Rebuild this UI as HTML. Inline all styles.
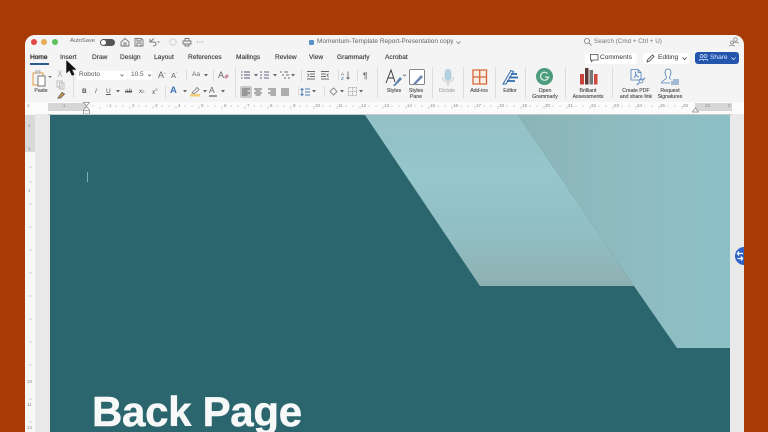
<!DOCTYPE html>
<html><head><meta charset="utf-8"><style>
html,body{margin:0;padding:0;width:768px;height:432px;overflow:hidden;background:#a83a05}
body{position:relative;font-family:"Liberation Sans",sans-serif;color:#333}
.t{position:absolute;white-space:nowrap;line-height:1}
.tab{font-size:6.6px;top:55px;color:#3c3c3c;-webkit-text-stroke:.15px #3c3c3c}
.lb{font-size:5.2px;color:#444;text-align:center;transform:translateX(-50%);line-height:6px;-webkit-text-stroke:.1px #444}
.sep{position:absolute;width:1px;background:#dcdcdc}
svg{position:absolute;overflow:visible}
</style></head><body>
<div style="position:absolute;left:24.5px;top:34.5px;width:719.5px;height:397.5px;background:#ebebeb;border-radius:10px 10px 0 0;overflow:hidden">
  <div style="position:absolute;left:0;top:0;width:720px;height:67px;background:#f4f4f4"></div>
  <div style="position:absolute;left:0;top:67px;width:720px;height:12px;background:#fbfbfb"></div>
  <div style="position:absolute;left:0;top:79px;width:720px;height:319px;background:#e9e9e9"></div>
  <div style="position:absolute;left:0;top:79px;width:10.500px;height:319px;background:#f8f8f8"></div>
  <div style="position:absolute;left:0;top:80.500px;width:10.500px;height:37px;background:#d9d9d9"></div>
</div>
<!-- traffic lights -->
<div style="position:absolute;left:30.5px;top:39px;width:6px;height:6px;border-radius:50%;background:#e0484a"></div>
<div style="position:absolute;left:41px;top:39px;width:6px;height:6px;border-radius:50%;background:#e9ac54"></div>
<div style="position:absolute;left:51.5px;top:39px;width:6px;height:6px;border-radius:50%;background:#5cc05a"></div>
<div class="t" style="left:70px;top:39px;font-size:5.8px;color:#666">AutoSave</div>
<div style="position:absolute;left:100px;top:38.5px;width:15px;height:7px;border-radius:4px;background:#555"></div>
<div style="position:absolute;left:101px;top:39.5px;width:5px;height:5px;border-radius:50%;background:#fff"></div>
<svg style="left:120px;top:37px" width="90" height="10" fill="none" stroke="#777" stroke-width=".9">
<path d="M1 5L5 1.500L9 5V9H1Z"/><path d="M4 9V6H6V9"/>
<path d="M15 1.500H21L23 3V9H15ZM17 1.500V4H21V1.500M17 9V6H21V9"/>
<path d="M30 2V5H33C37 5 37 9 33 9"/><path d="M30 5L34 1.500"/>
<path d="M37 4.500L38.500 6L40 4.500" fill="#777" stroke="none"/>
<circle cx="53" cy="5" r="3.200" stroke="#ccc"/>
<path d="M63 4H71V7H63ZM65 4V1.500H69V4M65 7V9H69V7"/>
<path d="M77 5H77.800M79.500 5H80.300M82 5H82.800"/>
</svg>
<!-- title -->
<div style="position:absolute;left:309px;top:39.5px;width:5px;height:5px;border-radius:1px;background:#5b93c7"></div>
<div class="t" style="left:317px;top:38.5px;font-size:6.500px;color:#666">Momentum-Template Report-Presentation copy</div>
<svg style="left:456px;top:40.500px" width="6" height="4" fill="none" stroke="#777" stroke-width=".8"><path d="M.5 .5L2.500 2.500L4.500 .5"/></svg>
<svg style="left:584px;top:38px" width="8" height="8" fill="none" stroke="#777" stroke-width=".8"><circle cx="3" cy="3" r="2.500"/><path d="M5 5L7.500 7.500"/></svg>
<div class="t" style="left:594px;top:38.500px;font-size:6.300px;color:#777">Search (Cmd + Ctrl + U)</div>
<svg style="left:729px;top:37px" width="10" height="10" fill="none" stroke="#8a8a8a" stroke-width=".8"><circle cx="6.500" cy="2.500" r="1.800"/><path d="M4 6.500C4 5 9 4.500 9.500 6.500"/><circle cx="3" cy="5.500" r="1.500"/><path d="M.5 9.500C.5 8 5 7.500 5.500 9.500"/></svg>
<!-- tabs -->
<div class="t tab" style="left:30px;color:#2b2b2b;-webkit-text-stroke:.3px #2b2b2b">Home</div>
<div style="position:absolute;left:30px;top:63px;width:19px;height:1.500px;background:#2c5b94"></div>
<div class="t tab" style="left:60px">Insert</div>
<div class="t tab" style="left:92px">Draw</div>
<div class="t tab" style="left:120px">Design</div>
<div class="t tab" style="left:154px">Layout</div>
<div class="t tab" style="left:188px">References</div>
<div class="t tab" style="left:236px">Mailings</div>
<div class="t tab" style="left:275px">Review</div>
<div class="t tab" style="left:309px">View</div>
<div class="t tab" style="left:337px">Grammarly</div>
<div class="t tab" style="left:385px">Acrobat</div>
<!-- comments/editing/share -->
<div style="position:absolute;left:585px;top:53px;width:52px;height:10.500px;background:#fff;border-radius:3px"></div>
<svg style="left:590px;top:54px" width="9" height="8" fill="none" stroke="#444" stroke-width=".8"><path d="M.5 .5H8V6H3L1.500 7.500V6H.5Z"/></svg>
<div class="t" style="left:600px;top:54.500px;font-size:6.600px;color:#333">Comments</div>
<div style="position:absolute;left:643px;top:53px;width:46px;height:10.500px;background:#fff;border-radius:3px"></div>
<svg style="left:646px;top:53.500px" width="9" height="9" fill="none" stroke="#444" stroke-width=".8"><path d="M1 8L1.500 6L6.500 1L8 2.500L3 7.500Z"/></svg>
<div class="t" style="left:658px;top:54.500px;font-size:6.600px;color:#333">Editing</div>
<svg style="left:682px;top:57px" width="6" height="4" fill="none" stroke="#444" stroke-width=".8"><path d="M.5 .5L2.500 2.500L4.500 .5"/></svg>
<div style="position:absolute;left:695px;top:52px;width:44px;height:12px;background:#2355ac;border-radius:3px"></div>
<svg style="left:699px;top:54px" width="9" height="8" fill="none" stroke="#cfe0ff" stroke-width=".7"><circle cx="2.500" cy="2" r="1.500"/><circle cx="6.500" cy="2" r="1.500"/><path d="M.5 7V5.500H4.500V7M4.500 5.500H8.500V7"/></svg>
<div class="t" style="left:710px;top:54.500px;font-size:6.600px;color:#d8e6ff">Share</div>
<svg style="left:731px;top:57px" width="6" height="4" fill="none" stroke="#d8e6ff" stroke-width=".8"><path d="M.5 .5L2.500 2.500L4.500 .5"/></svg>
<!-- clipboard group -->
<svg style="left:32px;top:70px" width="22" height="18" fill="none">
<path d="M1 3H11V15H1Z" stroke="#e19a45" stroke-width="1"/><path d="M4 3V1H8V3Z" stroke="#999" stroke-width=".8" fill="#eee"/>
<rect x="6" y="6" width="7" height="10" fill="#fff" stroke="#666" stroke-width=".9"/>
<path d="M16 6L18 8L20 6" fill="#777"/></svg>
<div class="t lb" style="left:41px;top:87.500px">Paste</div>
<svg style="left:55px;top:70px" width="12" height="30" fill="none" stroke="#bbb" stroke-width=".9">
<path d="M3.500 0.500L5 4L6.500 .5M3 7L4.300 4L5.700 4L7 7"/><path d="M2 11H7V17H2ZM4.500 13H9V19H4.500Z"/>
<path d="M3 28L7 22.500L9.500 24L5.500 28Z" fill="#e39c3c" stroke="#666"/></svg>
<div class="sep" style="left:73px;top:67px;height:31px"></div>
<!-- font -->
<div style="position:absolute;left:77px;top:70.500px;width:50px;height:9.500px;background:#fff;border-radius:2px"></div>
<div class="t" style="left:79px;top:72px;font-size:6.500px;color:#555">Roboto</div>
<div style="position:absolute;left:128px;top:70.500px;width:24px;height:9.500px;background:#fff;border-radius:2px"></div>
<div class="t" style="left:131px;top:72px;font-size:6.500px;color:#555">10.5</div>
<svg style="left:120px;top:74px" width="38" height="4" fill="none" stroke="#666" stroke-width=".8"><path d="M.5 .5L2 2L3.500 .5M28 .5L29.500 2L31 .5"/></svg>
<div class="t" style="left:158px;top:70.500px;font-size:9px;color:#666">A<span style="font-size:4px;vertical-align:3px">^</span></div>
<div class="t" style="left:171px;top:71.500px;font-size:7.500px;color:#666">A<span style="font-size:4px;vertical-align:3px">ˇ</span></div>
<div class="sep" style="left:186px;top:70px;height:11px"></div>
<div class="t" style="left:192px;top:72px;font-size:6.500px;color:#666">Aa</div>
<svg style="left:204px;top:74px" width="5" height="4" fill="#666"><path d="M0 0H4L2 2.500Z"/></svg>
<div class="sep" style="left:213px;top:70px;height:11px"></div>
<div class="t" style="left:218px;top:70.500px;font-size:9px;color:#666">A</div>
<svg style="left:224px;top:74px" width="6" height="6" fill="#c98fa0"><path d="M0 3L3 0L5 2L2 5Z"/></svg>
<div class="t" style="left:82px;top:89px;font-size:6.500px;font-weight:bold;color:#555">B</div>
<div class="t" style="left:95px;top:89px;font-size:6.500px;font-style:italic;color:#555">I</div>
<div class="t" style="left:106px;top:89px;font-size:6.500px;color:#555;text-decoration:underline">U</div>
<svg style="left:116px;top:90px" width="5" height="4" fill="#666"><path d="M0 0H4L2 2.500Z"/></svg>
<div class="t" style="left:125px;top:89px;font-size:6.500px;color:#555;text-decoration:line-through">ab</div>
<div class="t" style="left:139px;top:89px;font-size:6.500px;color:#555">x<span style="font-size:4px">2</span></div>
<div class="t" style="left:152px;top:88px;font-size:6.500px;color:#555">x<span style="font-size:4px;vertical-align:3px">2</span></div>
<div class="sep" style="left:165px;top:86px;height:12px"></div>
<div class="t" style="left:170px;top:86px;font-size:9.500px;font-weight:bold;color:#3e74b8">A</div>
<svg style="left:183px;top:90px" width="5" height="4" fill="#666"><path d="M0 0H4L2 2.500Z"/></svg>
<svg style="left:190px;top:86px" width="11" height="11"><path d="M2 7L7 1.500L9 3.500L4 8Z" fill="none" stroke="#777" stroke-width=".8"/><rect x="0" y="8" width="10" height="2.500" fill="#f3cf7a"/></svg>
<svg style="left:203px;top:90px" width="5" height="4" fill="#666"><path d="M0 0H4L2 2.500Z"/></svg>
<div class="t" style="left:209px;top:86px;font-size:8.500px;color:#666">A</div>
<div style="position:absolute;left:209px;top:95px;width:8px;height:1.500px;background:#999"></div>
<svg style="left:221px;top:90px" width="5" height="4" fill="#666"><path d="M0 0H4L2 2.500Z"/></svg>
<div class="sep" style="left:235px;top:67px;height:31px"></div>
<!-- paragraph row 1 -->
<svg style="left:241px;top:71px" width="135" height="10" fill="none" stroke="#6b6b6b" stroke-width=".9">
<path d="M0 1H1.500M3 1H9M0 4H1.500M3 4H9M0 7H1.500M3 7H9" stroke="#557"/>
<path d="M19 1H21M23 1H28M19 4H21M23 4H28M19 7H21M23 7H28" stroke="#668"/>
<path d="M39 1H41M43 1H47M41 4H43M45 4H48M43 7H45M47 7H49"/>
<path d="M66 .5H74M69 3H74M69 5.500H74M66 8H74M66.500 2.500L68 4.300L66.500 6"/>
<path d="M80 .5H88M80 3H85M80 5.500H85M80 8H88M87.500 2.500L86 4.300L87.500 6"/>
<path d="M107 .5V8M105.500 6.500L107 8L108.500 6.500"/>
<text x="100" y="4.500" font-size="4.500" fill="#555" stroke="none" font-family="Liberation Sans">A</text>
<text x="100" y="9" font-size="4.500" fill="#3f72ad" stroke="none" font-family="Liberation Sans">Z</text>
<text x="122" y="7.500" font-size="8" fill="#666" stroke="none" font-family="Liberation Sans" font-weight="bold">¶</text>
</svg>
<svg style="left:241px;top:73.500px" width="60" height="4" fill="#666"><path d="M13 0H17L15 2.500ZM32 0H36L34 2.500ZM50 0H54L52 2.500Z"/></svg>
<div class="sep" style="left:301px;top:70px;height:11px"></div>
<div class="sep" style="left:338px;top:70px;height:11px"></div>
<div class="sep" style="left:357px;top:70px;height:11px"></div>
<div style="position:absolute;left:240px;top:86px;width:12px;height:12px;background:#c9c9c9;border-radius:2px"></div>
<svg style="left:242px;top:88px" width="100" height="10" fill="none" stroke="#666" stroke-width=".9">
<path d="M0 1H8M0 3H5.500M0 5H8M0 7H5.500"/>
<path d="M12 1H20M13.500 3H18.500M12 5H20M13.500 7H18.500"/>
<path d="M26 1H34M28.500 3H34M26 5H34M28.500 7H34"/>
<path d="M39 1H47M39 3H47M39 5H47M39 7H47"/>
<path d="M60 1V7M58.500 2L60 .5L61.500 2M58.500 6L60 7.500L61.500 6M63 1H68M63 4H68M63 7H68" stroke="#4a7ab0"/>
</svg>
<div class="sep" style="left:298px;top:86px;height:11px"></div>
<div class="sep" style="left:324px;top:86px;height:11px"></div>
<svg style="left:312px;top:90px" width="5" height="4" fill="#666"><path d="M0 0H4L2 2.500Z"/></svg>
<svg style="left:329px;top:87px" width="9" height="9" fill="none" stroke="#777" stroke-width=".8"><path d="M1 4.500L4.500 1L8 4.500L4.500 8Z"/></svg>
<svg style="left:340px;top:90px" width="5" height="4" fill="#666"><path d="M0 0H4L2 2.500Z"/></svg>
<svg style="left:348px;top:87px" width="9" height="9" fill="none" stroke="#888" stroke-width=".7" stroke-dasharray="1 .8"><path d="M.5 .5H8.500V8.500H.5ZM4.500 .5V8.500M.5 4.500H8.500"/></svg>
<svg style="left:359px;top:90px" width="5" height="4" fill="#666"><path d="M0 0H4L2 2.500Z"/></svg>
<div class="sep" style="left:377px;top:67px;height:31px"></div>
<!-- styles -->
<svg style="left:385px;top:69px" width="22" height="18" fill="none"><path d="M1 14L6 1L10 13M3 9H9" stroke="#333" stroke-width=".9"/><path d="M8 17L15 8L17 10L10 17Z" fill="#5c7fa8"/><path d="M18 5.500L19.500 7L21 5.500" stroke="#666" stroke-width=".8"/></svg>
<div class="t lb" style="left:394px;top:87.500px">Styles</div>
<svg style="left:409px;top:69px" width="16" height="17" fill="none"><rect x=".5" y=".5" width="15" height="15" rx="1.500" fill="#fff" stroke="#666" stroke-width=".8"/><path d="M4 15L12 6L14 8L7 15Z" fill="#6a88ac"/></svg>
<div class="t lb" style="left:416px;top:87.500px">Styles<br>Pane</div>
<div class="sep" style="left:432px;top:67px;height:31px"></div>
<svg style="left:441px;top:69px" width="14" height="18"><rect x="3.500" y="0" width="7" height="12" rx="3.500" fill="#b4cfdf"/><path d="M1.500 8C1.500 15 12.500 15 12.500 8M7 13V17" fill="none" stroke="#c4c4c4" stroke-width=".9"/></svg>
<div class="t lb" style="left:447px;top:87.500px;color:#999;-webkit-text-stroke:0">Dictate</div>
<div class="sep" style="left:463px;top:67px;height:31px"></div>
<svg style="left:472px;top:69px" width="16" height="16"><rect x=".5" y=".5" width="14.500" height="15" fill="#f8efe4"/><path d="M1 1H14.500V15H1ZM1 8H14.500M7.700 1V15" fill="none" stroke="#d8673a" stroke-width="1.300"/></svg>
<div class="t lb" style="left:479px;top:87.500px">Add-ins</div>
<div class="sep" style="left:495px;top:67px;height:31px"></div>
<svg style="left:502px;top:69px" width="16" height="17"><path d="M1 15L9 1.500L11.500 2.500L4 15Z" fill="none" stroke="#2f6bb0" stroke-width="1"/><path d="M9 5H15M7 8.500H16M5 12H13" stroke="#2f6bb0" stroke-width="1.700"/></svg>
<div class="t lb" style="left:510px;top:87.500px">Editor</div>
<div class="sep" style="left:525px;top:67px;height:31px"></div>
<svg style="left:536px;top:68px" width="18" height="18"><circle cx="8.500" cy="8.500" r="8.500" fill="#4d9c7d"/><path d="M11.500 5.500A4 4 0 1 0 12.500 9H9" fill="none" stroke="#d6ebe0" stroke-width="1.300"/></svg>
<div class="t lb" style="left:545px;top:87.500px">Open<br>Grammarly</div>
<div class="sep" style="left:565px;top:67px;height:31px"></div>
<svg style="left:580px;top:68px" width="18" height="17"><rect x="0" y="6" width="4" height="10.500" fill="#c9433a"/><rect x="5" y="0" width="3.500" height="16.500" fill="#5a3a34"/><rect x="9.500" y="2" width="3.500" height="14.500" fill="#777"/><rect x="14" y="6" width="3.500" height="10.500" fill="#cf4a3c"/></svg>
<div class="t lb" style="left:588px;top:87.500px">Brilliant<br>Assessments</div>
<div class="sep" style="left:612px;top:67px;height:31px"></div>
<svg style="left:630px;top:69px" width="16" height="17" fill="none" stroke="#4f7fb8" stroke-width=".8"><path d="M1 .5H8L11 3.500V11H1ZM8 .5V3.500H11"/><path d="M4 9C6 7 6 4 5.500 3C5 5 7 8 9 8"/><circle cx="11" cy="12" r="2"/><path d="M9 14L7 16M13 10.500L15 9" stroke-width="1.200"/></svg>
<div class="t lb" style="left:636px;top:87.500px">Create PDF<br>and share link</div>
<svg style="left:661px;top:68px" width="19" height="18" fill="none" stroke="#4f7fb8" stroke-width=".8"><path d="M7 1C4 1 3.500 4 4.500 7C5 8 5.500 9 5.500 10C5 12 1 12 .5 15H9"/><path d="M7 1C10 1 10.500 4 9.500 7C9 8 8.500 9 8.500 10L10 11.500"/><path d="M10 14H18M10 16H18M12 12H18" stroke-width="1"/></svg>
<div class="t lb" style="left:670px;top:87.500px">Request<br>Signatures</div>
<!-- ruler -->
<div style="position:absolute;left:48px;top:103px;width:39px;height:8px;background:#d6d6d6"></div>
<div style="position:absolute;left:695px;top:103px;width:37px;height:8px;background:#d6d6d6"></div>
<svg style="left:25px;top:101px" width="718" height="13" fill="#888" stroke="#c4c4c4" stroke-width=".7" font-family="Liberation Sans">
<path d="M68 4V6M75 6V8M82 4V6M91 4V6M98 4V6M105 5V8M114 4V6M121 4V6M128 5V8M137 4V6M144 4V6M151 5V8M160 4V6M167 4V6M174 5V8M183 4V6M190 4V6M197 5V8M206 4V6M213 4V6M220 5V8M229 4V6M236 4V6M243 5V8M252 4V6M259 4V6M266 5V8M275 4V6M282 4V6M289 5V8M298 4V6M305 4V6M312 5V8M321 4V6M328 4V6M335 5V8M344 4V6M351 4V6M358 5V8M367 4V6M374 4V6M381 5V8M390 4V6M397 4V6M404 5V8M413 4V6M420 4V6M427 5V8M436 4V6M443 4V6M450 5V8M459 4V6M466 4V6M473 5V8M482 4V6M489 4V6M496 5V8M505 4V6M512 4V6M519 5V8M528 4V6M535 4V6M542 5V8M551 4V6M558 4V6M565 5V8M574 4V6M581 4V6M588 5V8M597 4V6M604 4V6M611 5V8M620 4V6M627 4V6M634 5V8M643 4V6M650 4V6M657 5V8"/>
<g font-size="4.500" stroke="none"><text x="2" y="6">1</text><text x="38" y="6">1</text><text x="84" y="6">1</text><text x="107" y="6">2</text><text x="130" y="6">3</text><text x="153" y="6">4</text><text x="176" y="6">5</text><text x="199" y="6">6</text><text x="222" y="6">7</text><text x="245" y="6">8</text><text x="268" y="6">9</text><text x="290" y="6">10</text><text x="313" y="6">11</text><text x="336" y="6">12</text><text x="359" y="6">13</text><text x="382" y="6">14</text><text x="405" y="6">15</text><text x="428" y="6">16</text><text x="451" y="6">17</text><text x="474" y="6">18</text><text x="497" y="6">19</text><text x="520" y="6">20</text><text x="543" y="6">21</text><text x="566" y="6">22</text><text x="589" y="6">23</text><text x="612" y="6">24</text><text x="635" y="6">25</text><text x="658" y="6">26</text><text x="680" y="6">22</text><text x="703" y="6">2</text></g>
</svg>
<svg style="left:83px;top:101.500px" width="8" height="13" fill="#fff" stroke="#888" stroke-width=".7"><path d="M.5 .5H6.500L3.500 4ZM3.500 4.500L6.500 8V12H.5V8Z"/><path d="M.5 8.500H6.500"/></svg>
<svg style="left:692px;top:107px" width="7" height="6" fill="#fff" stroke="#888" stroke-width=".7"><path d="M.5 5L3.500 1L6.500 5Z"/></svg>
<!-- v ruler ticks -->
<svg style="left:25px;top:114px" width="25" height="318" fill="#888" stroke="#c4c4c4" stroke-width=".7" font-family="Liberation Sans"><path d="M4 53H7M4 68H7M4 90H7M4 113H7M4 136H7M4 159H7M4 182H7M4 205H7M4 228H7M4 251H7M4 285H7M4 308H7"/><g font-size="4.500" stroke="none"><text x="3" y="13">1</text><text x="3" y="36">1</text><text x="3" y="78">1</text><text x="2" y="269">10</text><text x="2" y="292">11</text><text x="2" y="315">12</text></g></svg>
<!-- page -->
<div style="position:absolute;left:50px;top:115px;width:680px;height:317px;background:#2b656d"></div>
<div style="position:absolute;left:48px;top:113.500px;width:684px;height:1.500px;background:#c9c9c9"></div>
<svg style="left:50px;top:115px" width="680" height="317">
<defs>
<linearGradient id="a" x1="0" y1="0" x2="0" y2="1"><stop offset="0" stop-color="#93c0c4"/><stop offset=".35" stop-color="#95c7cb"/><stop offset=".7" stop-color="#91bfc3"/><stop offset="1" stop-color="#8fb0b2"/></linearGradient>
<linearGradient id="b" x1="0" y1="0" x2="1" y2="0"><stop offset="0" stop-color="#8bb4b8"/><stop offset=".6" stop-color="#8fbcc1"/><stop offset="1" stop-color="#8bc0c6"/></linearGradient>
</defs>
<path d="M468 0H680V233H627L584 171Z" fill="url(#b)"/>
<path d="M315 0H468L584 171H430Z" fill="url(#a)"/>
</svg>
<div style="position:absolute;left:87px;top:172px;width:1px;height:10px;background:#7fb0b5"></div>
<div class="t" style="left:92px;top:391px;font-size:42px;font-weight:bold;color:#f7f9f9;letter-spacing:-.3px;-webkit-text-stroke:.5px #f7f9f9">Back Page</div>
<!-- side button -->
<div style="position:absolute;left:735px;top:247px;width:18px;height:18px;border-radius:50%;background:#2f62c4"></div>
<svg style="left:737px;top:250px" width="6" height="12" fill="none" stroke="#fff" stroke-width="1.300"><path d="M.5 3.500H6M.5 8.500H6M2 1.500L.5 3.500L2 5.500M4 6.500L5.500 8.500L4 10.500"/></svg>
<div style="position:absolute;left:744px;top:240px;width:24px;height:32px;background:#a83a05"></div>
<!-- cursor -->
<svg style="left:65.500px;top:60px" width="12" height="17"><path d="M.5 .5V13L3.500 10.300L6 15.500L8.200 14.500L5.800 9.500H10Z" fill="#111" stroke="#222" stroke-width=".5"/></svg>
</body></html>
